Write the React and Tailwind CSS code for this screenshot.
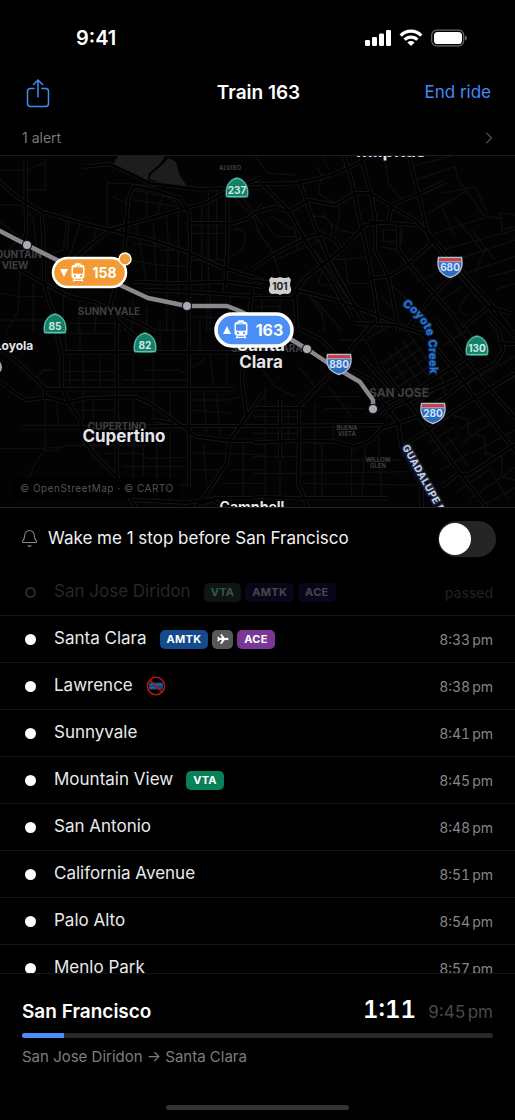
import React, { useState } from 'react';
import { Bell, ChevronRight } from 'lucide-react';
import { IoAirplane } from 'react-icons/io5';

const STOPS = [
  { name: 'San Jose Diridon', passed: true, badges: ['VTA', 'AMTK', 'ACE'] },
  { name: 'Santa Clara', time: '8:33', badges: ['AMTK', 'AIR', 'ACE'] },
  { name: 'Lawrence', time: '8:38', badges: ['NOTRAIN'] },
  { name: 'Sunnyvale', time: '8:41', badges: [] },
  { name: 'Mountain View', time: '8:45', badges: ['VTA'] },
  { name: 'San Antonio', time: '8:48', badges: [] },
  { name: 'California Avenue', time: '8:51', badges: [] },
  { name: 'Palo Alto', time: '8:54', badges: [] },
  { name: 'Menlo Park', time: '8:57', badges: [] },
];

const BADGE_COLORS = {
  VTA: 'bg-[#08805a] text-white',
  AMTK: 'bg-[#154a8c] text-white',
  ACE: 'bg-[#7b3796] text-white',
};

const PASSED_COLORS = {
  VTA: 'bg-[#101413] text-[#2c5c50]',
  AMTK: 'bg-[#080719] text-[#46464f]',
  ACE: 'bg-[#080719] text-[#46464f]',
};

// Roads are kept per map tile, in the tile's own 3x units
const TILES = [
  {
    transform: 'translate(0 -6) scale(0.3333)',
    major: [
      'M-5 90 L50 140 L125 185 L240 218 L330 240 L450 268 L560 305 L660 350 L790 392',
      'M785 82 L670 130 L620 158 L520 185 L400 220 L330 240 L270 285 L210 340 L150 375',
      'M125 185 L130 260 L132 400 L150 460 L165 500 L170 545',
      'M-5 325 L60 360 L150 410 L210 440 L280 455 L420 520 L470 545',
      'M325 240 L378 225 L385 150 L400 108 L480 125 L540 145 L568 190 L570 280 L566 400 L566 545',
      'M380 225 L375 290 L350 400 L330 470 L370 545',
      'M570 220 L700 220 L745 205 L790 165',
      'M77 30 L77 150 L78 250 L60 300 L5 345',
      'M400 395 L520 400 L680 395 L785 410',
      'M682 130 L682 290 L675 420',
      'M430 420 L560 425 L785 440',
      'M250 50 L330 42 L400 75 L450 100 L600 118 L790 112',
      'M755 420 L745 545',
    ],
    minor: [
      'M-5 165 L60 165 L100 205 L110 300 L100 330',
      'M-5 210 L70 270', 'M150 190 L200 215 L190 300 L160 310',
      'M210 190 L200 300', 'M322 90 L322 230', 'M322 100 L385 100 L470 110',
      'M240 220 L215 300 L200 330', 'M290 235 L270 300', 'M340 140 L385 165',
      'M400 120 L500 140 L535 160', 'M440 120 L440 200', 'M490 135 L470 200',
      'M400 150 L540 170', 'M410 225 L425 310 L440 400', 'M460 215 L470 400',
      'M500 195 L505 290 L500 430', 'M535 185 L535 440', 'M605 165 L605 300 L605 440',
      'M625 120 L625 440', 'M650 120 L650 330', 'M570 250 L680 250', 'M570 330 L690 330',
      'M480 300 L570 300', 'M400 280 L480 290', 'M390 330 L470 345 L566 350',
      'M700 140 L760 200 L790 270', 'M700 240 Q740 230 735 270 T690 320',
      'M720 130 L790 230', 'M-5 430 L60 440 L130 440', 'M60 360 L55 480 L20 545',
      'M100 400 L100 545', 'M190 430 L190 545', 'M240 450 L235 545', 'M290 460 L285 545',
      'M140 520 L350 520', 'M-5 510 L130 510', 'M400 450 L395 545', 'M440 470 L440 545',
      'M500 430 L500 545', 'M620 440 L620 545', 'M-5 60 L75 60 L130 40', 'M135 25 L135 120 L75 120',
      'M25 300 L75 250', 'M630 420 L630 545', 'M690 425 L690 545', 'M566 500 L700 505',
    ],
  },
  {
    transform: 'translate(255 -6) scale(0.3333)',
    major: [
      'M-5 102 L130 100 L230 75 L320 35 L345 5',
      'M265 15 L290 90 L310 190 L340 320 L360 440 L375 545',
      'M315 15 L345 120 L360 200 L360 300 L400 380 L420 480 L430 545',
      'M460 15 L490 130 L520 260 L585 340 L680 450 L780 560',
      'M300 130 L345 130 L410 170 L480 210 L540 270 L600 340 L700 450 L770 545',
      'M-5 190 L60 170 L100 185 L160 150 L240 165 L300 130',
      'M-5 355 L60 310 L150 265 L200 250 L240 270 L260 300',
      'M120 425 L150 385 L260 300 L330 225 L400 215 L410 165 L495 130 L570 95',
      'M125 420 L240 450 L350 490 L450 530 L520 540',
      'M130 85 L170 200 L230 350 L300 470 L345 545',
      'M20 100 L100 180 L150 270 L220 380 L290 500',
      'M340 215 L480 225',
      'M-5 390 L45 400', 'M-5 445 L110 445 L130 425',
      'M345 385 L405 378 L450 350 L530 280',
      'M430 225 L430 300 L500 390 L590 490 L625 545',
      'M120 430 L125 545',
      'M770 490 L700 470 L640 520 L620 545',
      'M450 545 L530 440 L590 380',
    ],
    minor: [
      'M0 20 L40 70 L120 75', 'M185 50 L200 80 L190 130 L240 160', 'M200 20 L225 60',
      'M385 240 L440 240 L440 275 L385 275 Z', 'M390 30 L400 100 L440 150', 'M420 25 L560 15',
      'M470 50 L600 15', 'M480 90 L600 50 L610 90 L690 200', 'M560 130 L660 110 L695 185',
      'M520 190 L640 120', 'M540 250 L700 200 L745 205', 'M560 300 L780 240', 'M600 330 L780 270',
      'M630 370 L780 320', 'M650 240 L720 330', 'M600 200 L680 300', 'M690 300 L660 370',
      'M740 210 L740 240 L780 230', 'M735 210 L735 190 L780 195', 'M560 170 L600 260',
      'M170 200 Q220 190 230 230 T180 270', 'M200 190 L250 240 L300 250', 'M50 200 L120 240 L130 300',
      'M0 230 L50 300 L75 375', 'M30 215 L60 260 L120 260', 'M60 330 L200 270',
      'M180 300 L260 420 L320 500', 'M200 290 L280 420', 'M210 340 L190 400 L230 410',
      'M240 330 L350 320', 'M270 330 L280 400 L360 400', 'M375 290 L430 300',
      'M440 430 L500 500', 'M480 400 L560 360', 'M400 400 L450 440 L440 470',
      'M380 440 L420 480', 'M640 430 L610 480 L640 500', 'M560 450 L620 410',
      'M160 430 L200 490 L210 545', 'M180 450 L260 540', 'M240 250 L255 200 L250 160',
      'M0 470 L75 470', 'M20 445 L20 545', 'M75 445 L75 500', 'M700 380 L780 360', 'M720 420 L780 400',
    ],
  },
  {
    transform: 'translate(0 164) scale(0.3333)',
    major: [
      'M-5 180 L40 215 L80 240 L140 232 L200 248 L260 235 L340 232 L410 232 L450 250 L520 300 L590 350 L690 362 L790 362',
      'M170 40 L185 110 L185 200 L205 245 L240 300 L250 360 L290 410 L350 470 L410 565',
      'M-5 80 L50 125 L100 170 L135 205 L135 235',
      'M195 97 L400 97 L790 97',
      'M135 208 L560 208 L700 208',
      'M350 -5 L350 470', 'M567 -5 L567 500', 'M65 322 L240 322 L560 318 L790 318',
      'M790 220 L740 290 L690 360 L680 430 L620 520 L585 565',
      'M735 110 L725 180 L740 290',
      'M345 -5 L440 80', 'M400 540 L560 548 L650 535 L790 535',
      'M590 555 L640 540 L680 570', 'M460 300 L520 310',
    ],
    minor: [
      'M190 155 L345 155', 'M210 100 L210 205', 'M250 100 L250 300', 'M300 100 L300 205',
      'M185 180 L350 180', 'M365 180 L560 180', 'M400 100 L400 205', 'M460 100 L460 300',
      'M510 210 L510 300', 'M540 160 L560 150 L600 130 L620 110', 'M430 150 L540 150',
      'M630 100 L640 200', 'M680 100 L680 200', 'M575 240 L680 240 L720 230', 'M570 270 L700 280',
      'M610 210 L620 340', 'M650 220 L660 350', 'M-5 385 L130 385 L190 380', 'M135 210 L135 390 L100 440 L85 480',
      'M195 376 L440 376', 'M170 250 L175 320', 'M315 400 L420 400 L440 415 L560 412', 'M400 240 L400 440 L400 540',
      'M430 380 L430 470', 'M470 330 L470 540', 'M510 330 L510 540', 'M370 440 L560 440',
      'M350 495 L560 495', 'M580 400 L680 400', 'M580 450 L660 450', 'M610 370 L620 500',
      'M690 400 L790 405', 'M690 450 L790 450', 'M670 490 L790 490', 'M730 370 L730 540',
      'M280 240 L280 390', 'M240 270 L345 270', 'M190 -5 L200 90', 'M240 20 L240 90', 'M195 40 L340 40',
      'M460 30 L560 30', 'M480 -5 L480 95', 'M520 -5 L520 95', 'M600 -5 L600 95',
      'M130 390 Q160 400 190 378', 'M160 150 L130 150 L110 175',
    ],
  },
  {
    transform: 'translate(255 164) scale(0.3333)',
    major: [
      'M-5 368 L130 362 L240 365 L300 380 L350 360 L380 325 L430 310 L500 285 L560 240 L650 170 L720 130 L745 90 L730 30 L700 -5',
      'M130 500 L132 330 L132 260 L180 210 L240 150 L300 70 L360 5',
      'M-5 318 L385 315', 'M-5 265 L150 265', 'M75 240 L75 420',
      'M130 25 L200 60 L250 110 L290 150 L350 180 L380 240 L400 270 L430 310 L440 380 L480 440 L540 520 L560 570',
      'M300 10 L420 15 L500 40 L540 80 L600 150 L700 290 L785 400',
      'M540 -5 L590 60 L680 180 L785 300',
      'M370 130 L430 210 L500 300 L600 440 L700 570',
      'M320 110 L400 200 L410 240', 'M365 285 L400 250 L500 200 L640 110',
      'M390 290 L420 260 L620 170', 'M440 380 L520 330 L600 270 L780 160',
      'M730 70 L785 72', 'M560 500 L610 460 L640 465 L785 370',
      'M135 500 L160 570', 'M500 570 L500 500 L440 380',
      'M-5 530 L130 535 L400 535',
    ],
    minor: [
      'M250 60 L330 60 L370 130', 'M330 60 L400 20', 'M380 130 L480 60', 'M395 155 L500 85',
      'M415 180 L520 110', 'M430 200 L540 130', 'M440 60 L520 170', 'M420 80 L500 200',
      'M400 100 L480 220', 'M460 40 L560 180', 'M450 240 L560 160', 'M470 260 L560 200',
      'M560 20 L640 130', 'M600 20 L680 110', 'M620 5 L700 120', 'M560 80 L640 30',
      'M600 160 L700 90', 'M620 200 L780 110', 'M650 240 L780 170', 'M560 170 L570 230 L520 250',
      'M590 285 L640 300 L640 340 L690 350 L690 400 L740 410 L740 470 L780 480',
      'M610 330 L700 280', 'M620 370 L720 300', 'M650 400 L780 330', 'M580 350 L640 440',
      'M520 370 L600 320', 'M530 400 L610 350', 'M560 450 L640 400', 'M600 520 L700 450',
      'M640 540 L785 440', 'M680 560 L785 500', 'M700 440 L760 540', 'M180 250 L180 310',
      'M220 200 L290 290', 'M200 230 L320 230', 'M210 265 L330 265', 'M30 200 L30 370',
      'M100 260 L100 360', 'M-5 290 L130 290', 'M-5 340 L130 340', 'M180 315 L180 530',
      'M235 315 L235 360', 'M200 370 L200 530', 'M290 385 L290 530', 'M330 380 L320 530',
      'M370 350 L380 530', 'M140 420 L440 420', 'M140 460 L460 455', 'M140 490 L480 495',
      'M30 370 L30 530', 'M75 420 L75 530', 'M-5 410 L130 410', 'M-5 460 L130 460',
      'M0 30 L20 20', 'M10 130 L60 200 L120 230', 'M130 140 L180 200',
    ],
  },
];

const STATIONS = [[27, 89], [187, 150], [307, 193], [373, 253]];

const STATE_ROUTES = [
  { n: '237', x: 237, y: 32 },
  { n: '85', x: 55, y: 168 },
  { n: '82', x: 145, y: 187 },
  { n: '130', x: 477, y: 190 },
];

const INTERSTATES = [
  { n: '680', x: 450, y: 111 },
  { n: '880', x: 339, y: 208 },
  { n: '280', x: 433, y: 257 },
];

const DISTRICTS = [
  { t: 'ALVISO', x: 230, y: 14, cls: 'text-[6px]' },
  { t: 'SUNNYVALE', x: 109, y: 159, cls: 'text-[10px]' },
  { t: 'MOUNTAIN', x: 14, y: 102, cls: 'text-[10px]' },
  { t: 'VIEW', x: 15, y: 113, cls: 'text-[10px]' },
  { t: 'CUPERTINO', x: 117, y: 274, cls: 'text-[10px]' },
  { t: 'SANTA CLARA', x: 267, y: 196, cls: 'text-[10px]' },
  { t: 'SAN JOSE', x: 399, y: 241, cls: 'text-[12px]' },
  { t: 'BUENA', x: 347, y: 274, cls: 'text-[6px]' },
  { t: 'VISTA', x: 347, y: 280, cls: 'text-[6px]' },
  { t: 'WILLOW', x: 378, y: 306, cls: 'text-[6px]' },
  { t: 'GLEN', x: 378, y: 312, cls: 'text-[6px]' },
];

function StatusBar() {
  return (
    <div className="flex items-center justify-between pl-[76px] pr-[48px] pt-6 h-[52px]">
      <span className="text-[20px] leading-7 font-semibold">9:41</span>
      <svg className="w-[102px] h-[18px]" viewBox="0 0 102 18" fill="#fff" aria-hidden="true">
        <rect x="0" y="11" width="5" height="6" rx="1.3" />
        <rect x="7" y="8" width="5" height="9" rx="1.3" />
        <rect x="14" y="4.500" width="5" height="12.500" rx="1.3" />
        <rect x="21" y="1" width="5" height="16" rx="1.3" />
        <g fill="none" stroke="#fff" strokeWidth="3.200">
          <path d="M35.700 6.600 A14 14 0 0 1 56.300 6.600" />
          <path d="M39.600 10.700 A9 9 0 0 1 52.400 10.700" />
        </g>
        <path d="M46 17 L42.400 13.400 A5.200 5.200 0 0 1 49.600 13.400 Z" />
        <rect x="66.700" y="1.200" width="32" height="15.600" rx="5" fill="none" stroke="#6b6b6d" strokeWidth="1.200" />
        <rect x="69" y="3" width="28" height="12" rx="3.600" />
        <path d="M100 6.500 q2 .8 2 2.500 t-2 2.500 z" fill="#6b6b6d" />
      </svg>
    </div>
  );
}

function ShareIcon() {
  return (
    <svg className="w-[24px] h-[29px]" viewBox="0 0 24 29" fill="none" stroke="currentColor" strokeWidth="1.5" strokeLinecap="round" strokeLinejoin="round">
      <path d="M8 9.500 H4.500 Q1.500 9.500 1.500 12.500 V24.500 Q1.500 27.500 4.500 27.500 H19.500 Q22.500 27.500 22.500 24.500 V12.500 Q22.500 9.500 19.500 9.500 H16" />
      <path d="M12 18 V1.200 M7.500 5.500 L12 1 L16.500 5.500" />
    </svg>
  );
}

function TrainGlyph({ x, y, hole }) {
  return (
    <g transform={`translate(${x} ${y})`}>
      <rect x="3.500" y="-1.200" width="6" height="3" rx="1" fill="#fff" />
      <rect x="0" y="0.300" width="13" height="14" rx="3.200" fill="#fff" />
      <path d="M4.500 1.600 H8.500" stroke={hole} strokeWidth="0.700" />
      <rect x="1.500" y="2.800" width="10" height="6.400" rx="1" fill={hole} />
      <circle cx="3.400" cy="11.600" r="1.100" fill={hole} />
      <circle cx="9.600" cy="11.600" r="1.100" fill={hole} />
      <path d="M3.200 14 L1.500 17 M9.800 14 L11.500 17 M2.300 15.800 H10.700" stroke="#fff" strokeWidth="1.200" fill="none" />
    </g>
  );
}

function RouteMap() {
  return (
    <svg className="block w-full h-[351px] shrink-0 font-bold" viewBox="0 0 515 351" preserveAspectRatio="xMidYMid slice" role="img" aria-label="Live train map">
      <rect x="-1000" width="2515" height="351" fill="#030303" />
      <g fill="#1c1d1f">
        <path d="M118 0 H165 L160 8 L149 17 L147 26 L136 22 L124 16 L113 9 Z" />
        <path d="M161 10 L169 2 L176 6 L179 18 L188 32 L165 28 L149 23 L152 17 Z" />
      </g>
      {TILES.map(tile => (
        <g key={tile.transform} transform={tile.transform} fill="none" strokeLinejoin="round">
          <path d={tile.minor.join(' ')} stroke="#0e0f10" strokeWidth="4" />
          <path d={tile.major.join(' ')} stroke="#1a1b1c" strokeWidth="12" />
          <path d={tile.major.join(' ')} stroke="#000" strokeWidth="8" />
        </g>
      ))}

      <g textAnchor="middle" fill="#3e3f42">
        {DISTRICTS.map(d => <text key={d.t} x={d.x} y={d.y} className={d.cls}>{d.t}</text>)}
      </g>

      <path d="M-4 73 L27 89 L57 104 L90 118 L120 129 L148 142 L187 150 L227 150 L240 155 L292 184 L307 193 L328 207 L360 226 L373 244 V253" fill="none" stroke="#88888d" strokeWidth="4.500" strokeLinejoin="round" />
      {STATIONS.map(([x, y]) => (
        <circle key={x} cx={x} cy={y} r="4.600" fill="#a8adb5" stroke="#17181a" strokeWidth="1.200" />
      ))}

      <g textAnchor="middle" fill="#d2e8e0">
        {STATE_ROUTES.map(r => (
          <g key={r.n} transform={`translate(${r.x} ${r.y})`}>
            <path d="M0 -11 C5 -10 10 -6 11 0 C12 3 12 6 11 9.500 Q0 10.500 -11 9.500 C-12 6 -12 3 -11 0 C-10 -6 -5 -10 0 -11 Z" fill="#14806a" />
            <path d="M0 -9.600 C5 -8.600 9 -5 10 0 C10.800 3 10.800 6 10 8.400 H-10 C-10.800 6 -10.800 3 -10 0 C-9 -5 -5 -8.600 0 -9.600 Z" fill="none" stroke="#8ccab8" strokeWidth="0.900" />
            <text y="6" className="text-[10px]">{r.n}</text>
          </g>
        ))}
      </g>
      <g textAnchor="middle" fill="#d5e2f5">
        {INTERSTATES.map(r => (
          <g key={r.n} transform={`translate(${r.x} ${r.y})`}>
            <path d="M-11.500 -9.500 H11.500 C13 -2 12 7 0 10.500 C-12 7 -13 -2 -11.500 -9.500 Z" fill="#2a6bc4" stroke="#b9bfca" strokeWidth="1.400" />
            <path d="M-10.800 -8.800 H10.800 L11.300 -5.500 H-11.300 Z" fill="#d63a3a" />
            <path d="M-11.500 -5.200 H11.500" stroke="#c8cdd6" strokeWidth="0.800" />
            <text y="4" className="text-[10px]">{r.n}</text>
          </g>
        ))}
      </g>
      <g transform="translate(280 130)">
        <path d="M-9 -9 Q-5 -7 0 -9 Q5 -7 9 -9 L11 -6 Q9 -1 11 2 Q12 7 8 8 Q3 7 0 9 Q-3 7 -8 8 Q-12 7 -11 2 Q-9 -1 -11 -6 Z" fill="#cfcfcf" />
        <text y="4" textAnchor="middle" fill="#222" className="text-[10px]">101</text>
      </g>

      <g textAnchor="middle" fill="#e4e5ea" stroke="#000" strokeWidth="2" paintOrder="stroke">
        <text x="124" y="286" className="text-[17px]">Cupertino</text>
        <text x="261" y="195" className="text-[17px]">Santa</text>
        <text x="261" y="212" className="text-[17px]">Clara</text>
        <text x="391" y="1" className="text-[18px]">Milpitas</text>
        <text x="252" y="356" className="text-[14px]">Campbell</text>
        <text x="14" y="194" className="text-[12px]">Loyola</text>
      </g>
      <circle cx="-6" cy="211" r="7" fill="none" stroke="#a5a5a8" strokeWidth="2" />

      <defs>
        <path id="creek" d="M402 149 Q428 166 429 190 T429 240" />
        <path id="river" d="M402 291 L450 377" />
      </defs>
      <text className="text-[11px] tracking-wider" fill="#2f78d2" stroke="#0a2c59" strokeWidth="2" paintOrder="stroke">
        <textPath href="#creek">Coyote Creek</textPath>
      </text>
      <text className="text-[10px] tracking-wider" fill="#cfd6e6" stroke="#1b2640" strokeWidth="3" paintOrder="stroke">
        <textPath href="#river">GUADALUPE RIVER</textPath>
      </text>

      <rect x="12" y="322" width="168" height="20" fill="#000" opacity="0.700" />
      <text x="20" y="336" fill="#545557" className="text-[10px] font-normal tracking-wider">© OpenStreetMap · © CARTO</text>

      <g>
        <rect x="53" y="102" width="73" height="29" rx="14.500" fill="#f39a35" stroke="#fff" strokeWidth="2.500" />
        <path d="M60 113 h8 l-4 8 z" fill="#fff" />
        <TrainGlyph x={71.5} y={108.5} hole="#f39a35" />
        <text x="104.500" y="122" textAnchor="middle" fill="#fff" className="text-[14px]">158</text>
        <circle cx="125" cy="103" r="6" fill="#f39a35" stroke="#fff" strokeWidth="1.500" />
      </g>
      <g>
        <rect x="216" y="158" width="76" height="32" rx="16" fill="#4b8ef5" stroke="#fff" strokeWidth="3.500" />
        <path d="M223 178 h8 l-4 -8 z" fill="#fff" />
        <TrainGlyph x={234.5} y={165.5} hole="#4b8ef5" />
        <text x="269.500" y="180" textAnchor="middle" fill="#fff" className="text-[16px]">163</text>
      </g>
    </svg>
  );
}

function NoTrainIcon() {
  return (
    <svg className="w-5 h-5" viewBox="0 0 20 20" fill="none" role="img" aria-label="No connecting trains">
      <rect x="3" y="6.500" width="14" height="7" rx="1" fill="#12468a" />
      <path d="M4 8.500 H16 M4 11.800 H9" stroke="#1c6aa8" strokeWidth="1.500" />
      <circle cx="10" cy="10" r="8.700" stroke="#b3150f" strokeWidth="1.600" />
      <path d="M4 4 L16 16" stroke="#b3150f" strokeWidth="1.600" />
    </svg>
  );
}

function Badge({ type, passed }) {
  if (type === 'NOTRAIN') return <NoTrainIcon />;
  if (type === 'AIR') {
    return (
      <span className="flex items-center justify-center w-[21px] h-[19px] rounded-[5px] bg-[#58585b]">
        <IoAirplane className="w-3 h-3 text-white" />
      </span>
    );
  }
  const colors = passed ? PASSED_COLORS[type] : BADGE_COLORS[type];
  return (
    <span className={`flex items-center h-[19px] px-[7px] rounded-[5px] text-[11px] font-bold tracking-wide ${colors}`}>
      {type}
    </span>
  );
}

function StopRow({ stop }) {
  return (
    <li className="flex items-center h-[47px] shrink-0 px-[22px] border-b border-[#161617]">
      <span className="flex justify-center w-[17px] mr-[15px]">
        {stop.passed
          ? <span className="w-[11px] h-[11px] rounded-full border-2 border-[#2a2a2c]" />
          : <span className="w-[11px] h-[11px] rounded-full bg-white" />}
      </span>
      <span className={`text-[17px] ${stop.passed ? 'text-[#272729]' : 'text-[#e9eaec]'}`}>{stop.name}</span>
      <span className="flex items-center gap-1 ml-[13px]">
        {stop.badges.map(b => <Badge key={b} type={b} passed={stop.passed} />)}
      </span>
      {stop.passed
        ? <span className="ml-auto text-[14px] text-[#232325]">passed</span>
        : (
          <span className="ml-auto flex gap-[2px] text-[14px] text-[#85858a] tabular-nums">
            <span>{stop.time}</span>
            <span>pm</span>
          </span>
        )}
    </li>
  );
}

export default function App() {
  const [wake, setWake] = useState(false);
  const progress = 9;

  return (
    <div className="flex flex-col h-screen bg-black text-white font-['Inter',sans-serif]">
      <StatusBar />

      <header className="grid grid-cols-[1fr_auto_1fr] items-center h-[82px] pl-[26px] pr-[24px]">
        <button type="button" aria-label="Share" className="justify-self-start text-[#3f8cf4]">
          <ShareIcon />
        </button>
        <h1 className="text-[19px] font-semibold">Train 163</h1>
        <button type="button" className="justify-self-end text-[17px] text-[#3f8cf4]">End ride</button>
      </header>

      <button type="button" className="flex items-center justify-between h-[22px] pb-[14px] pl-[22px] pr-[16px] border-b border-[#1c1c1e] text-[#77777b]">
        <span className="text-[14px]">1 alert</span>
        <ChevronRight className="w-5 h-5 shrink-0 text-[#4c4c50]" strokeWidth={1.5} />
      </button>

      <RouteMap />

      <label className="flex items-center h-[62px] shrink-0 pl-[20px] pr-[19px] border-t border-[#242426] text-[17px] text-[#f1f1f3]">
        <Bell className="w-[19px] h-[19px] mr-[9px] text-[#8a8a8e]" strokeWidth={1.3} />
        Wake me 1 stop before San Francisco
        <input
          type="checkbox"
          role="switch"
          checked={wake}
          onChange={e => setWake(e.target.checked)}
          className="appearance-none ml-auto w-[58px] h-[36px] px-[1px] py-[2px] rounded-full bg-[#252527] checked:bg-[#34c759] before:block before:w-[32px] before:h-[32px] before:rounded-full before:bg-white checked:before:ml-[24px]"
        />
      </label>

      <ul className="flex flex-col flex-1 min-h-0 overflow-y-auto [scrollbar-width:none]">
        {STOPS.map(s => <StopRow key={s.name} stop={s} />)}
      </ul>

      <footer className="shrink-0 px-[22px] pt-[20px] pb-[10px] border-t border-[#161617]">
        <div className="flex items-baseline">
          <span className="text-[19px] font-semibold">San Francisco</span>
          <span className="ml-auto mr-3 text-[24px] leading-8 font-semibold tabular-nums">1:11</span>
          <span className="flex gap-[2px] text-[17px] text-[#49494c] tabular-nums">
            <span>9:45</span>
            <span>pm</span>
          </span>
        </div>
        <div className="h-[5px] mt-[7px] rounded-full bg-[#29292b] overflow-hidden">
          <div className="h-full bg-[#4b8ef5]" style={{ width: `${progress}%` }} />
        </div>
        <p className="mt-[9px] text-[15px] leading-5 text-[#7d7d81]">San Jose Diridon → Santa Clara</p>
        <div className="w-[183px] h-[5px] mx-auto mt-[38px] rounded-full bg-[#333336]" />
      </footer>
    </div>
  );
}
